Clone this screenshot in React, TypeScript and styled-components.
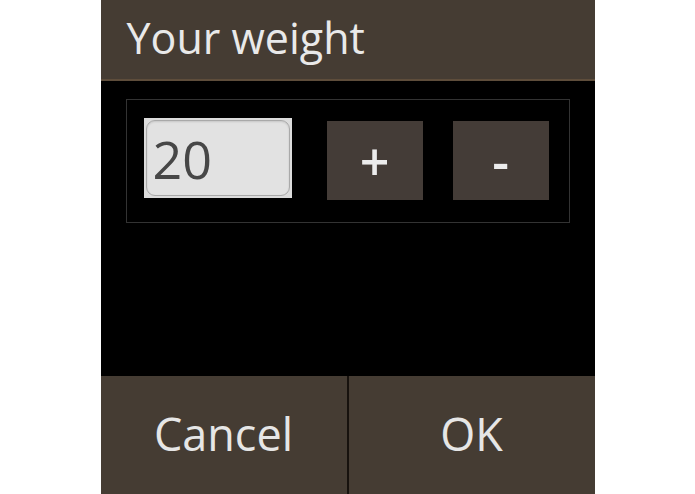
import React, { useState } from "react";
import styled, { createGlobalStyle } from "styled-components";

const GlobalStyle = createGlobalStyle`
  html, body {
    margin: 0;
    padding: 0;
    background: #ffffff;
  }
  body {
    font-family: "Open Sans", "Noto Sans", sans-serif;
  }
`;

const Dialog = styled.div`
  width: 494px;
  height: 494px;
  margin: 0 auto;
  display: flex;
  flex-direction: column;
  background: #000;
`;

const TitleBar = styled.div`
  height: 81px;
  box-sizing: border-box;
  padding: 16px 0 0 26px;
  background: #453c33;
  border-bottom: 2px solid #5e4d3b;
  color: #e9e9e9;
  font-size: 43px;
  line-height: 1;
  flex-shrink: 0;
`;

const Body = styled.div`
  flex: 1;
  padding: 18px 25px 0 25px;
`;

const Stepper = styled.div`
  height: 124px;
  box-sizing: border-box;
  border: 1px solid #333;
  display: flex;
  align-items: flex-start;
  padding: 18px 19px 0 17px;
`;

const Field = styled.div`
  width: 148px;
  height: 80px;
  box-sizing: border-box;
  padding: 2px;
  background: #dcdcdc;
  margin-right: 35px;
`;

const ValueInput = styled.input`
  width: 100%;
  height: 100%;
  box-sizing: border-box;
  margin: 0;
  border: 1px solid #a9a9a9;
  border-radius: 9px;
  background: #e2e2e2;
  box-shadow: inset 0 1px 2px rgba(0, 0, 0, 0.12);
  padding: 0 0 0 6px;
  font-family: "Open Sans", sans-serif;
  font-size: 52px;
  color: #474747;
  outline: none;
`;

const StepButton = styled.button<{ $last?: boolean }>`
  width: 96px;
  height: 79px;
  margin-top: 3px;
  margin-right: ${(p) => (p.$last ? "0" : "30px")};
  border: none;
  padding: 0;
  background: #443c37;
  color: #ececec;
  font-family: "Open Sans", sans-serif;
  font-weight: 600;
  font-size: 52px;
  line-height: 1;
  display: flex;
  align-items: center;
  justify-content: center;
`;

const Actions = styled.div`
  height: 118px;
  display: flex;
  flex-shrink: 0;
`;

const ActionButton = styled.button<{ $divider?: boolean }>`
  flex: 1;
  border: none;
  border-left: ${(p) => (p.$divider ? "2px solid #17120e" : "none")};
  padding: 0 0 4px 0;
  background: #453c33;
  color: #e6e6e6;
  font-family: "Open Sans", sans-serif;
  font-size: 45px;
  line-height: 1;
`;

export default function App() {
  const [weight, setWeight] = useState(20);

  return (
    <>
      <GlobalStyle />
      <Dialog>
        <TitleBar>Your weight</TitleBar>
        <Body>
          <Stepper>
            <Field>
              <ValueInput
                value={weight}
                onChange={(e) => setWeight(Number(e.target.value) || 0)}
              />
            </Field>
            <StepButton onClick={() => setWeight((w) => w + 1)}>+</StepButton>
            <StepButton $last onClick={() => setWeight((w) => w - 1)}>
              -
            </StepButton>
          </Stepper>
        </Body>
        <Actions>
          <ActionButton>Cancel</ActionButton>
          <ActionButton $divider>OK</ActionButton>
        </Actions>
      </Dialog>
    </>
  );
}
